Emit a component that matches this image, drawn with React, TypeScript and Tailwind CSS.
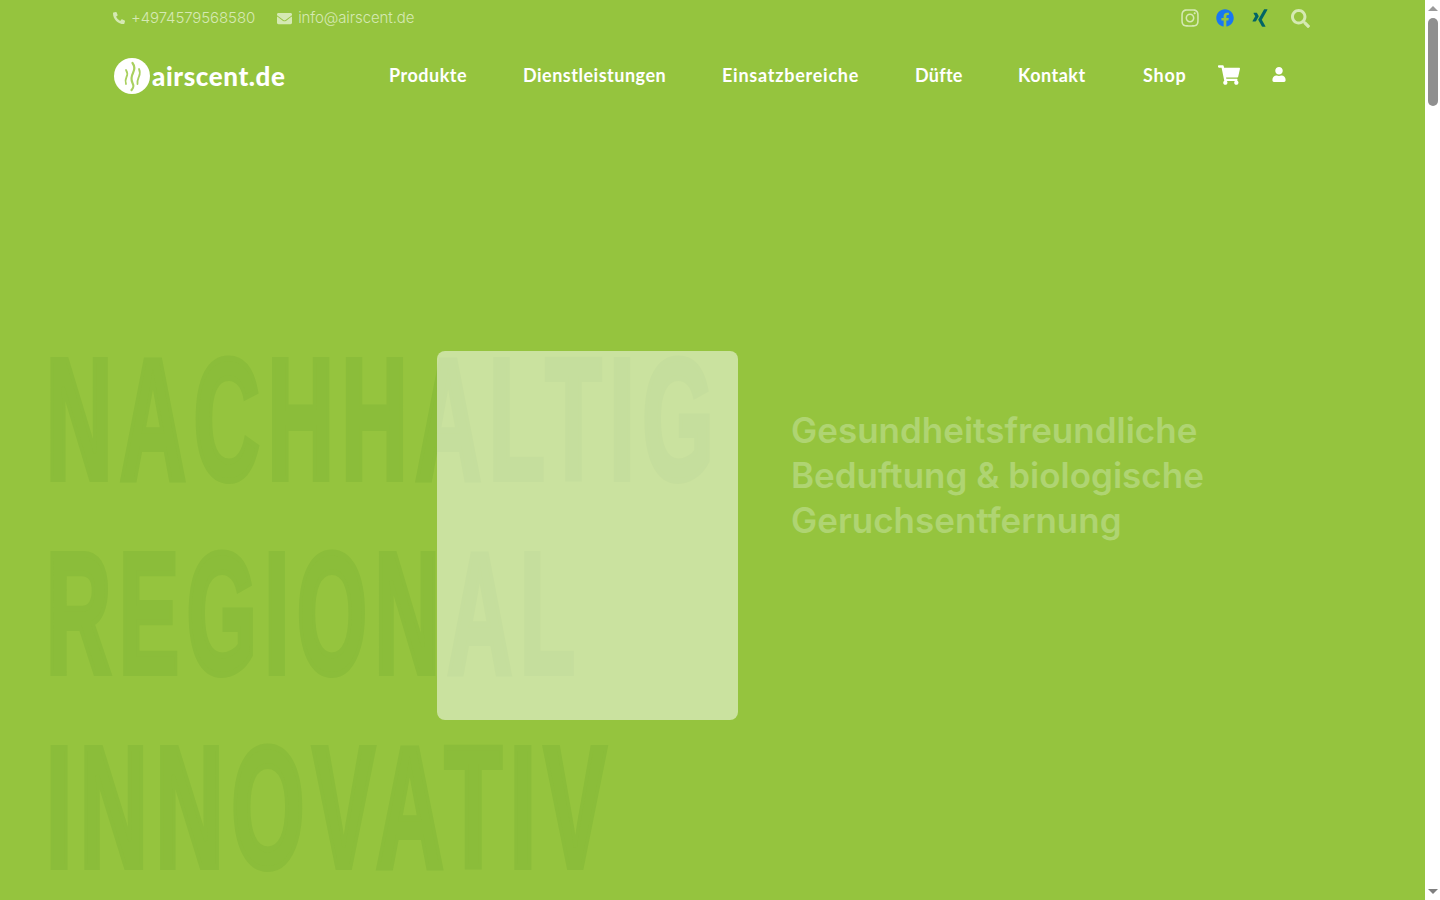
import { FaEnvelope, FaFacebook, FaInstagram, FaPhoneAlt, FaSearch, FaShoppingCart, FaUser, FaXing } from "react-icons/fa";

const navItems = [
	{ label: "Produkte", className: "w-[134px]" },
	{ label: "Dienstleistungen", className: "w-[199px]" },
	{ label: "Einsatzbereiche", className: "w-[193px] tracking-[0.75px]" },
	{ label: "Düfte", className: "w-[103px] tracking-[0.25px]" },
	{ label: "Kontakt", className: "w-[125px]" },
	{ label: "Shop", className: "w-[75px] tracking-[0.75px]" },
];

const Logo = () => (
	<div className="flex items-center">
		<svg width="38" height="38" viewBox="0 0 38 38" className="mr-[1px]">
			<circle cx="19" cy="19" r="18" fill="#ffffff" />
			<g fill="none" stroke="#a9d05f" strokeLinecap="round">
				<path d="M19.500 6c3 4 2 7 .5 10s-2.500 6-.5 10 .5 5-1 7" strokeWidth="2.200" />
				<path d="M13 13c2 3 1.500 5 .5 7s-1.500 4-.5 7" strokeWidth="1.800" />
				<path d="M26 12c1.500 3 1 5 0 7.500s-2 4-1.500 7.500" strokeWidth="1.800" />
			</g>
		</svg>
		<span className="font-['Lato',sans-serif] text-[26px] leading-none font-black tracking-[0.6px] text-white">airscent.de</span>
	</div>
);

const TopBar = () => (
	<div className="flex h-9 items-center justify-between pr-[115px] pl-[113px] font-['Inter',sans-serif] text-[15px] font-light tracking-[-0.1px] text-[#d5e9b3]">
		<div className="flex items-center">
			<FaPhoneAlt className="mr-[6px] h-3 w-3" />
			<span>+4974579568580</span>
			<FaEnvelope className="mr-[6px] ml-[22px] h-[15px] w-[15px]" />
			<span>info@airscent.de</span>
		</div>
		<div className="flex items-center">
			<FaInstagram className="h-5 w-5 text-[#d5e9b3]" />
			<FaFacebook className="ml-[16px] h-[18px] w-[18px] text-[#1877f2]" />
			<FaXing className="ml-[17px] h-5 w-[18px] text-[#026466]" />
			<FaSearch className="ml-[22px] h-[19px] w-[19px] text-[#d5e9b3]" />
		</div>
	</div>
);

const NavBar = () => (
	<div className="flex h-[79px] items-center pl-[113px]">
		<div className="w-[276px]">
			<Logo />
		</div>
		<nav className="flex -translate-y-px items-center font-['Lato',sans-serif] text-lg font-bold tracking-[0.5px] text-white">
			{navItems.map((item) => (
				<a key={item.label} className={item.className}>
					{item.label}
				</a>
			))}
		</nav>
		<FaShoppingCart className="h-5 w-[22px] -translate-y-px text-white" />
		<FaUser className="ml-8 h-[15px] w-[14px] -translate-y-px text-white" />
	</div>
);

const Hero = () => (
	<div className="grid grid-cols-1 grid-rows-1">
		<div className="col-start-1 row-start-1 flex flex-col gap-[14px] pt-[214px] pl-[46px] font-['Liberation_Sans',sans-serif] text-[172px] leading-[180px] font-bold tracking-[14px] text-[#8bbd3a] [-webkit-text-stroke:6px_#8bbd3a]">
			<div className="origin-left scale-x-[0.534] whitespace-nowrap">NACHHALTIG</div>
			<div className="origin-left scale-x-[0.526] whitespace-nowrap">REGIONAL</div>
			<div className="origin-left scale-x-[0.548] whitespace-nowrap">INNOVATIV</div>
		</div>
		<div className="z-10 col-start-1 row-start-1 flex items-start pt-[236px] pl-[437px]">
			<div className="h-[369px] w-[301px] rounded-lg bg-white/50" />
			<h1 className="mt-[57px] ml-[53px] w-[460px] font-['Inter',sans-serif] text-[35px] leading-[45px] font-semibold text-[#afd472]">
				Gesundheitsfreundliche Beduftung &amp; biologische Geruchsentfernung
			</h1>
		</div>
	</div>
);

const Scrollbar = () => (
	<aside className="flex w-[15px] flex-col items-center bg-white">
		<div className="mt-[6px] h-0 w-0 border-r-[5px] border-b-[5px] border-l-[5px] border-r-transparent border-b-[#9a9a9a] border-l-transparent" />
		<div className="mt-[7px] h-[88px] w-[10px] rounded-full bg-[#8f8f8f]" />
		<div className="mt-auto mb-[6px] h-0 w-0 border-t-[5px] border-r-[5px] border-l-[5px] border-t-[#7f7f7f] border-r-transparent border-l-transparent" />
	</aside>
);

export default function App() {
	return (
		<div className="flex h-[900px] overflow-hidden">
			<main className="min-w-0 flex-1 overflow-hidden bg-[#95c43e]">
				<TopBar />
				<NavBar />
				<Hero />
			</main>
			<Scrollbar />
		</div>
	);
}
